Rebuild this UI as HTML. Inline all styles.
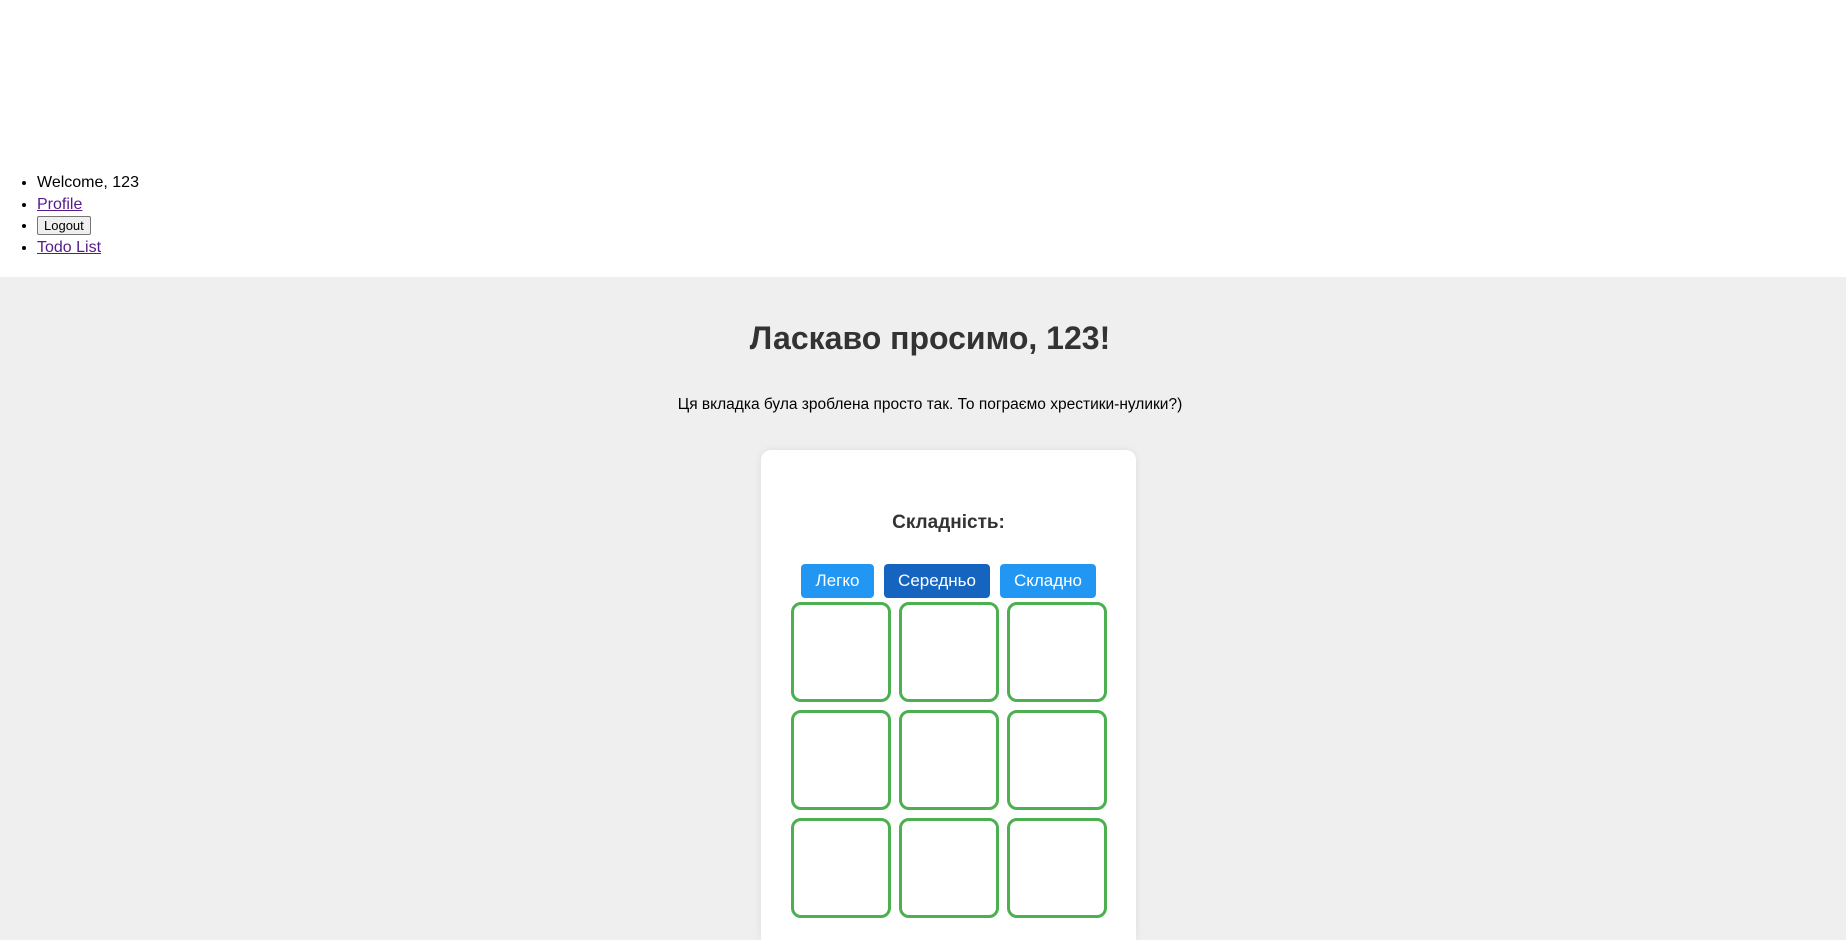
<!DOCTYPE html>
<html><head><meta charset="utf-8"><style>
html,body{margin:0;width:1846px;height:940px;overflow:hidden}
body{font-family:"Liberation Sans","DejaVu Sans",sans-serif;background:#fff;position:relative}
ul{position:absolute;left:0;top:172px;margin:0;padding-left:37px;font-size:16px;line-height:21.5px}
a{color:#551a8b}
button.lo{font-size:13px;padding:1px 6px;border:1px solid #767676;border-radius:2px;background:#efefef}
.gray{position:absolute;left:0;top:277px;width:1846px;height:663px;background:#efefef}
h1{position:absolute;left:0;width:1860px;top:320px;margin:0;text-align:center;font-size:32px;color:#333;font-weight:bold}
p{position:absolute;left:0;width:1860px;top:396px;margin:0;text-align:center;font-size:15.5px;color:#000}
.card{position:absolute;left:761px;top:450px;width:375px;height:490px;background:#fff;border-radius:10px 10px 0 0;box-shadow:0 0 8px rgba(0,0,0,.08)}
h3{position:absolute;left:761px;width:375px;top:512px;margin:0;text-align:center;font-size:19px;color:#333}
.b{position:absolute;top:564px;height:34px;border-radius:4px;background:#2196f3;color:#fff;font-size:17px;line-height:34px;text-align:center}
.c{position:absolute;width:94px;height:94px;border:3px solid #4caf50;border-radius:10px;background:#fff}
</style></head><body>
<ul><li>Welcome, 123</li><li><a href="#">Profile</a></li><li><button class="lo">Logout</button></li><li><a href="#">Todo List</a></li></ul>
<div class="gray"></div>
<h1>Ласкаво просимо, 123!</h1>
<p>Ця вкладка була зроблена просто так. То пограємо хрестики-нулики?)</p>
<div class="card"></div>
<h3>Складність:</h3>
<div class="b" style="left:801px;width:73px">Легко</div>
<div class="b" style="left:884px;width:106px;background:#1565c0">Середньо</div>
<div class="b" style="left:1000px;width:96px">Складно</div>
<div class="c" style="left:791px;top:602px"></div><div class="c" style="left:899px;top:602px"></div><div class="c" style="left:1007px;top:602px"></div>
<div class="c" style="left:791px;top:710px"></div><div class="c" style="left:899px;top:710px"></div><div class="c" style="left:1007px;top:710px"></div>
<div class="c" style="left:791px;top:818px"></div><div class="c" style="left:899px;top:818px"></div><div class="c" style="left:1007px;top:818px"></div>
</body></html>
